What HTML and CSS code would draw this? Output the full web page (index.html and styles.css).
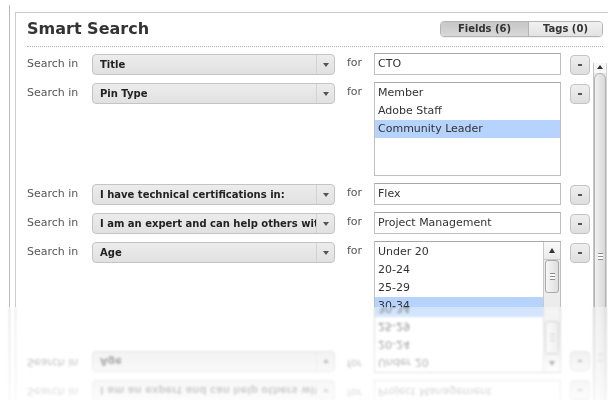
FILE: index.html
```html
<!DOCTYPE html>
<html lang="en">
<head>
<meta charset="utf-8">
<title>Smart Search</title>
<link rel="stylesheet" href="styles.css">
</head>
<body>
<div class="window">
  <div class="frame">
    <section class="panel">
      <header class="head">
        <h1 class="title">Smart Search</h1>
        <div class="tabs">
          <button class="tab tab-fields on">Fields (6)</button>
          <button class="tab tab-tags">Tags (0)</button>
        </div>
      </header>
      <div class="body">
        <div class="rows">
          <div class="row">
            <span class="lbl">Search in</span>
            <div class="sel"><span class="sel-text">Title</span><span class="sel-btn"></span></div>
            <span class="for">for</span>
            <div class="field">CTO</div>
            <span class="minus"></span>
          </div>
          <div class="row">
            <span class="lbl">Search in</span>
            <div class="sel"><span class="sel-text">Pin Type</span><span class="sel-btn"></span></div>
            <span class="for">for</span>
            <div class="field list">
              <div class="opt">Member</div>
              <div class="opt">Adobe Staff</div>
              <div class="opt on">Community Leader</div>
            </div>
            <span class="minus"></span>
          </div>
          <div class="row">
            <span class="lbl">Search in</span>
            <div class="sel"><span class="sel-text">I have technical certifications in:</span><span class="sel-btn"></span></div>
            <span class="for">for</span>
            <div class="field">Flex</div>
            <span class="minus"></span>
          </div>
          <div class="row">
            <span class="lbl">Search in</span>
            <div class="sel"><span class="sel-text">I am an expert and can help others with:</span><span class="sel-btn"></span></div>
            <span class="for">for</span>
            <div class="field">Project Management</div>
            <span class="minus"></span>
          </div>
          <div class="row">
            <span class="lbl">Search in</span>
            <div class="sel"><span class="sel-text">Age</span><span class="sel-btn"></span></div>
            <span class="for">for</span>
            <div class="field list tall">
              <div class="opts">
                <div class="opt">Under 20</div>
                <div class="opt">20-24</div>
                <div class="opt">25-29</div>
                <div class="opt on">30-34</div>
                <div class="opt">35-39</div>
                <div class="opt">40-44</div>
              </div>
              <div class="lscroll">
                <span class="ls-up"></span>
                <span class="ls-thumb"><span class="grip"></span></span>
              </div>
            </div>
            <span class="minus"></span>
          </div>
        </div>
        <div class="vscroll">
          <span class="vs-up"></span>
          <span class="vs-thumb"><span class="grip"></span></span>
        </div>
      </div>
    </section>
  </div>
</div>
<div class="haze"></div>
</body>
</html>
```

FILE: styles.css
```css
* { box-sizing: border-box; }

html, body {
  margin: 0;
  background: #fff;
}

body {
  width: 608px;
  height: 400px;
  overflow: hidden;
  position: relative;
  font-family: "DejaVu Sans", Verdana, sans-serif;
  color: #333;
}

/* the whole window casts a soft mirror image below itself */
.window {
  height: 307px;
  overflow: hidden;
  padding: 5px 0 0 9px;
  -webkit-box-reflect: below 0 linear-gradient(to bottom,
      rgba(0,0,0,0) 60%,
      rgba(0,0,0,0.2) 72%,
      rgba(0,0,0,0.38) 82%,
      rgba(0,0,0,0.62) 100%);
}

.frame {
  height: 100%;
  border-left: 1px solid #b9b9b9;
  padding: 7px 0 0 5px;
}

.panel {
  height: 100%;
  border-top: 1px solid #cbcbcb;
  border-left: 1px solid #cbcbcb;
  padding-left: 11px;
}

/* header: title + segmented tabs */
.head {
  display: flex;
  align-items: center;
  justify-content: space-between;
  margin-right: 5px;
  padding: 8px 0 9px;
  border-bottom: 1px dotted #b3b3b3;
}

.title {
  margin: 0;
  font-size: 16px;
  line-height: 16px;
  font-weight: bold;
  color: #333;
}

.tabs {
  display: flex;
  height: 16px;
  border: 1px solid #b4b4b4;
  border-radius: 4px;
  overflow: hidden;
  box-shadow: 0 1px 0 rgba(0,0,0,0.06);
}

.tab {
  border: 0;
  margin: 0;
  padding: 0;
  font-family: inherit;
  font-size: 10px;
  font-weight: bold;
  line-height: 14px;
  color: #333;
  text-align: center;
}

.tab-fields {
  width: 88px;
  border-right: 1px solid #b4b4b4;
  background: linear-gradient(#c6c6c6, #d8d8d8);
}

.tab-tags {
  width: 73px;
  background: linear-gradient(#f1f1f1, #e2e2e2);
}

/* criteria rows */
.body {
  display: flex;
  padding-top: 6px;
}

.rows {
  flex: 1;
  display: flex;
  flex-direction: column;
  gap: 7px;
}

.row {
  display: flex;
  align-items: flex-start;
}

.lbl {
  width: 65px;
  flex: none;
  font-size: 11px;
  line-height: 14px;
  padding-top: 4px;
  color: #555;
}

.sel {
  width: 243px;
  flex: none;
  height: 21px;
  margin-top: 1px;
  display: flex;
  border: 1px solid #c4c4c4;
  border-radius: 4px;
  background: linear-gradient(#ececec, #e1e1e1);
}

.sel-text {
  flex: 1;
  overflow: hidden;
  white-space: nowrap;
  padding-left: 7px;
  font-size: 10px;
  font-weight: bold;
  line-height: 19px;
  color: #222;
}

.sel-btn {
  width: 18px;
  flex: none;
  border-left: 1px solid #d2d2d2;
  display: flex;
  align-items: center;
  justify-content: center;
}

.sel-btn::before {
  content: "";
  border-left: 3px solid transparent;
  border-right: 3px solid transparent;
  border-top: 4px solid #555;
}

.for {
  width: 39px;
  flex: none;
  padding: 3px 0 0 12px;
  font-size: 11px;
  line-height: 14px;
  color: #555;
}

.field {
  width: 187px;
  flex: none;
  height: 22px;
  border: 1px solid #bfbfbf;
  border-top-color: #a8a8a8;
  background: #fff;
  padding-left: 3px;
  font-size: 11px;
  line-height: 20px;
  color: #333;
}

.list {
  height: 94px;
  padding: 1px 0 0;
}

.opt {
  height: 18px;
  line-height: 18px;
  padding-left: 3px;
  white-space: nowrap;
}

.opt.on { background: #b5d3fc; }

.tall {
  height: 130px;
  display: flex;
}

.opts { flex: 1; }

/* listbox scroller */
.lscroll {
  width: 17px;
  flex: none;
  margin-top: -1px;
  display: flex;
  flex-direction: column;
  border-left: 1px solid #c9c9c9;
  background: #ececec;
}

.ls-up {
  height: 18px;
  flex: none;
  display: flex;
  align-items: center;
  justify-content: center;
  background: linear-gradient(#fafafa, #e9e9e9);
  border-bottom: 1px solid #c9c9c9;
}

.ls-up::before {
  content: "";
  border-left: 3px solid transparent;
  border-right: 3px solid transparent;
  border-bottom: 5px solid #333;
}

.ls-thumb {
  height: 33px;
  flex: none;
  margin: 0 1px;
  border: 1px solid #a9a9a9;
  border-radius: 3px;
  background: linear-gradient(to right, #f6f6f6, #dedede);
  display: flex;
  align-items: center;
  justify-content: center;
}

.grip {
  width: 5px;
  height: 7px;
  border-top: 1px solid #8d8d8d;
  border-bottom: 1px solid #8d8d8d;
  background: linear-gradient(#fff 0 2px, #8d8d8d 2px 3px, #fff 3px);
}

.minus {
  width: 20px;
  height: 20px;
  flex: none;
  margin: 2px 0 0 9px;
  border: 1px solid #c4c4c4;
  border-radius: 4px;
  background: linear-gradient(#efefef, #dedede);
  display: flex;
  align-items: center;
  justify-content: center;
}

.minus::before {
  content: "";
  width: 4px;
  height: 2px;
  background: #555;
}

/* page scroller */
.vscroll {
  width: 14px;
  flex: none;
  margin: 10px 1px 0 0;
  display: flex;
  flex-direction: column;
  border-left: 1px solid #c7c7c7;
  border-right: 1px solid #d4d4d4;
  background: #e6e6e6;
}

.vs-up {
  height: 10px;
  flex: none;
  display: flex;
  justify-content: center;
  padding-top: 2px;
  background: #f6f6f6;
}

.vs-up::before {
  content: "";
  width: 0;
  height: 0;
  border-left: 3px solid transparent;
  border-right: 3px solid transparent;
  border-bottom: 4px solid #333;
}

.vs-thumb {
  height: 366px;
  flex: none;
  border: 1px solid #b3b3b3;
  border-radius: 6px 6px 0 0;
  background: linear-gradient(to right, #f0f0f0, #d9d9d9);
  display: flex;
  align-items: center;
  justify-content: center;
}

.vs-thumb .grip { width: 5px; }

/* softens the mirror image */
.haze {
  position: absolute;
  left: 0;
  right: 0;
  top: 307px;
  bottom: 0;
  -webkit-backdrop-filter: blur(0.8px);
  backdrop-filter: blur(0.8px);
}
```
